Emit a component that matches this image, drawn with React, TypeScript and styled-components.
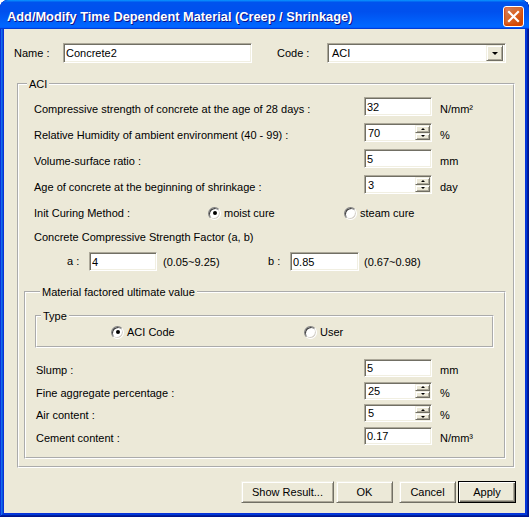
import React from "react";
import styled, { createGlobalStyle, css } from "styled-components";

const GlobalStyle = createGlobalStyle`
  html, body {
    margin: 0;
    padding: 0;
    background: #ffffff;
  }
  body {
    font-family: "Liberation Sans", Arial, sans-serif;
    font-size: 11px;
    color: #000;
  }
  * {
    box-sizing: border-box;
  }
`;

const sunken = css`
  background: #fff;
  border: 1px solid;
  border-color: #aca899 #fff #fff #aca899;
  box-shadow: inset 1px 1px 0 #716f64, inset -1px -1px 0 #f1efe2;
`;

const raised = css`
  background: #ece9d8;
  border: 1px solid;
  border-color: #f1efe2 #716f64 #716f64 #f1efe2;
  box-shadow: inset 1px 1px 0 #fff, inset -1px -1px 0 #aca899;
`;

const Window = styled.div`
  width: 529px;
  height: 517px;
  display: flex;
  flex-direction: column;
  background: #0831d9;
  border-radius: 8px 8px 0 0;
  overflow: hidden;
  box-shadow: inset -1px -1px #00138c, inset 1px 1px #0831d9,
    inset -2px -2px #001ea0, inset 2px 2px #166aee, inset -3px -3px #003bda,
    inset 3px 3px #0855dd;
`;

const TitleBar = styled.div`
  height: 29px;
  flex: none;
  display: flex;
  align-items: center;
  justify-content: space-between;
  padding: 3px 5px 0 7px;
  border-radius: 8px 8px 0 0;
  background: linear-gradient(
    180deg,
    #0997ff,
    #0053ee 8%,
    #0050ee 40%,
    #06f 88%,
    #06f 93%,
    #005bff 95%,
    #003dd7 96%,
    #003dd7
  );
`;

const Title = styled.span`
  font-family: "Liberation Sans", Arial, sans-serif;
  font-weight: 700;
  font-size: 12.8px;
  color: #fff;
  text-shadow: 1px 1px #0f1089;
`;

const CloseButton = styled.div`
  width: 21px;
  height: 21px;
  border: 1px solid #fff;
  border-radius: 3px;
  display: flex;
  align-items: center;
  justify-content: center;
  background: radial-gradient(
    circle at 90% 90%,
    #cc4600 0%,
    #dc6527 55%,
    #cd7546 70%,
    #e37d5f 90%
  );
  box-shadow: inset 0 -1px 2px 1px #da4600;
`;

const Body = styled.div`
  flex: 1;
  margin: 0 4px 4px 4px;
  background: #ece9d8;
  display: flex;
  flex-direction: column;
  padding: 14px 9px 0 10px;
`;

const TopRow = styled.div`
  display: flex;
  align-items: center;
  height: 20px;
`;

const FieldLabel = styled.span<{ $width: number; $gap?: number }>`
  width: ${(p) => p.$width}px;
  margin-left: ${(p) => p.$gap ?? 0}px;
  line-height: 13px;
  white-space: nowrap;
`;

const TextBox = styled.input<{ $width: number; $height?: number }>`
  ${sunken};
  width: ${(p) => p.$width}px;
  height: ${(p) => p.$height ?? 19}px;
  padding: 0 2px;
  font: inherit;
  color: #000;
  outline: none;
`;

const SelectBox = styled.div`
  ${sunken};
  width: 179px;
  height: 20px;
  display: flex;
  align-items: center;
  padding: 2px 2px 2px 4px;
`;

const SelectValue = styled.span`
  flex: 1;
`;

const DropButton = styled.div`
  ${raised};
  width: 17px;
  height: 16px;
  display: flex;
  align-items: center;
  justify-content: center;
`;

const Arrow = styled.span<{ $dir: "up" | "down"; $size: number }>`
  width: 0;
  height: 0;
  border-left: ${(p) => p.$size}px solid transparent;
  border-right: ${(p) => p.$size}px solid transparent;
  ${(p) =>
    p.$dir === "down"
      ? `border-top: ${p.$size}px solid #000;`
      : `border-bottom: ${p.$size}px solid #000;`}
`;

const Group = styled.fieldset<{
  $width: number;
  $pad: string;
  $mt?: number;
  $ml?: number;
}>`
  margin: ${(p) => p.$mt ?? 0}px 0 0 ${(p) => p.$ml ?? 0}px;
  width: ${(p) => p.$width}px;
  min-width: 0;
  padding: ${(p) => p.$pad};
  border: 2px groove #fff;
`;

const Legend = styled.legend<{ $ml: number }>`
  padding: 0 2px;
  margin-left: ${(p) => p.$ml}px;
  line-height: 14px;
  white-space: nowrap;
`;

const FormGrid = styled.div<{ $labelWidth: number; $rowGap: number; $pl: number }>`
  display: grid;
  grid-template-columns: ${(p) => p.$labelWidth}px 68px auto;
  column-gap: 8px;
  row-gap: ${(p) => p.$rowGap}px;
  align-items: end;
  padding-left: ${(p) => p.$pl}px;
`;

const Label = styled.span`
  line-height: 13px;
  white-space: nowrap;
`;

const Unit = styled.span`
  line-height: 13px;
  white-space: nowrap;
`;

const SpinBox = styled.div<{ $height: number }>`
  ${sunken};
  width: 68px;
  height: ${(p) => p.$height}px;
  display: flex;
  padding: 1px;
`;

const SpinText = styled.span`
  flex: 1;
  display: flex;
  align-items: center;
  padding-left: 2px;
`;

const SpinButtons = styled.div`
  width: 15px;
  display: flex;
  flex-direction: column;
`;

const SpinHalf = styled.div`
  ${raised};
  flex: 1;
  display: flex;
  align-items: center;
  justify-content: center;
`;

const OptionRow = styled.div<{ $mt: number; $pl: number }>`
  display: flex;
  align-items: center;
  height: 16px;
  margin-top: ${(p) => p.$mt}px;
  padding-left: ${(p) => p.$pl}px;
`;

const RadioItem = styled.label<{ $width?: number }>`
  display: flex;
  align-items: center;
  gap: 3px;
  width: ${(p) => (p.$width ? `${p.$width}px` : "auto")};
  line-height: 13px;
  white-space: nowrap;
`;

const RadioCircle = styled.span<{ $checked?: boolean }>`
  width: 13px;
  height: 13px;
  border-radius: 50%;
  background: #fff;
  border: 1px solid;
  border-color: #808080 #fff #fff #808080;
  box-shadow: inset 1px 1px 0 #404040, inset -1px -1px 0 #d4d0c8;
  display: flex;
  align-items: center;
  justify-content: center;
  flex: none;
  &::after {
    content: "";
    width: 4px;
    height: 4px;
    border-radius: 50%;
    background: ${(p) => (p.$checked ? "#000" : "transparent")};
  }
`;

const Caption = styled.div<{ $mt: number; $pl: number }>`
  margin-top: ${(p) => p.$mt}px;
  padding-left: ${(p) => p.$pl}px;
  line-height: 13px;
`;

const FactorRow = styled.div`
  display: flex;
  align-items: center;
  margin-top: 8px;
  padding-left: 43px;
  height: 19px;
`;

const Range = styled.span<{ $width?: number; $ml: number }>`
  margin-left: ${(p) => p.$ml}px;
  width: ${(p) => (p.$width ? `${p.$width}px` : "auto")};
  white-space: nowrap;
`;

const Spacer = styled.div<{ $h: number }>`
  height: ${(p) => p.$h}px;
`;

const ButtonBar = styled.div`
  display: flex;
  justify-content: flex-end;
  margin-top: 13px;
`;

const Button = styled.button<{ $width: number; $ml?: number; $default?: boolean }>`
  ${raised};
  width: ${(p) => p.$width}px;
  height: 22px;
  margin-left: ${(p) => p.$ml ?? 0}px;
  padding: 0;
  font: inherit;
  color: #000;
  ${(p) =>
    p.$default &&
    css`
      border: 1px solid #000;
      box-shadow: inset 1px 1px 0 #fff, inset -1px -1px 0 #716f64,
        inset -2px -2px 0 #aca899;
    `}
`;

type Field = {
  label: string;
  value: string;
  unit: string;
  spin?: boolean;
};

const aciFields: Field[] = [
  { label: "Compressive strength of concrete at the age of 28 days :", value: "32", unit: "N/mm²" },
  { label: "Relative Humidity of ambient environment (40 - 99) :", value: "70", unit: "%", spin: true },
  { label: "Volume-surface ratio :", value: "5", unit: "mm" },
  { label: "Age of concrete at the beginning of shrinkage :", value: "3", unit: "day", spin: true },
];

const materialFields: Field[] = [
  { label: "Slump :", value: "5", unit: "mm" },
  { label: "Fine aggregate percentage :", value: "25", unit: "%", spin: true },
  { label: "Air content :", value: "5", unit: "%", spin: true },
  { label: "Cement content :", value: "0.17", unit: "N/mm³" },
];

function FieldInput({ field, height }: { field: Field; height: number }) {
  if (field.spin) {
    return (
      <SpinBox $height={height}>
        <SpinText>{field.value}</SpinText>
        <SpinButtons>
          <SpinHalf>
            <Arrow $dir="up" $size={2} />
          </SpinHalf>
          <SpinHalf>
            <Arrow $dir="down" $size={2} />
          </SpinHalf>
        </SpinButtons>
      </SpinBox>
    );
  }
  return <TextBox $width={68} $height={height} defaultValue={field.value} readOnly />;
}

function Fields({
  fields,
  labelWidth,
  rowGap,
  pl,
  height,
}: {
  fields: Field[];
  labelWidth: number;
  rowGap: number;
  pl: number;
  height: number;
}) {
  // the 8px column gap sits between every column, so take it off the label column
  return (
    <FormGrid $labelWidth={labelWidth - 8} $rowGap={rowGap} $pl={pl}>
      {fields.map((f) => (
        <React.Fragment key={f.label}>
          <Label>{f.label}</Label>
          <FieldInput field={f} height={height} />
          <Unit>{f.unit}</Unit>
        </React.Fragment>
      ))}
    </FormGrid>
  );
}

export default function App() {
  return (
    <>
      <GlobalStyle />
      <Window>
        <TitleBar>
          <Title>Add/Modify Time Dependent Material (Creep / Shrinkage)</Title>
          <CloseButton>
            <svg width="13" height="13" viewBox="0 0 13 13">
              <path d="M2 2 L11 11 M11 2 L2 11" stroke="#fff" strokeWidth="2.2" strokeLinecap="square" />
            </svg>
          </CloseButton>
        </TitleBar>
        <Body>
          <TopRow>
            <FieldLabel $width={49}>Name :</FieldLabel>
            <TextBox $width={189} $height={20} defaultValue="Concrete2" readOnly />
            <FieldLabel $width={50} $gap={25}>
              Code :
            </FieldLabel>
            <SelectBox>
              <SelectValue>ACI</SelectValue>
              <DropButton>
                <Arrow $dir="down" $size={3.5} />
              </DropButton>
            </SelectBox>
          </TopRow>

          <Group $width={498} $pad="6px 7px 7px 5px" $mt={14} $ml={3}>
            <Legend $ml={3}>ACI</Legend>
            <Fields fields={aciFields} labelWidth={330} rowGap={7} pl={10} height={19} />

            <OptionRow $mt={11} $pl={10}>
              <FieldLabel $width={174}>Init Curing Method :</FieldLabel>
              <RadioItem $width={136}>
                <RadioCircle $checked />
                moist cure
              </RadioItem>
              <RadioItem>
                <RadioCircle />
                steam cure
              </RadioItem>
            </OptionRow>

            <Caption $mt={10} $pl={10}>
              Concrete Compressive Strength Factor (a, b)
            </Caption>

            <FactorRow>
              <FieldLabel $width={22}>a :</FieldLabel>
              <TextBox $width={68} defaultValue="4" readOnly />
              <Range $ml={6} $width={105}>
                (0.05~9.25)
              </Range>
              <FieldLabel $width={22}>b :</FieldLabel>
              <TextBox $width={69} defaultValue="0.85" readOnly />
              <Range $ml={5}>(0.67~0.98)</Range>
            </FactorRow>

            <Group $width={482} $pad="10px 9px 12px 9px" $mt={14}>
              <Legend $ml={5}>Material factored ultimate value</Legend>
              <Group $width={459} $pad="1px 0 6px 0">
                <Legend $ml={4}>Type</Legend>
                <OptionRow $mt={0} $pl={74}>
                  <RadioItem $width={193}>
                    <RadioCircle $checked />
                    ACI Code
                  </RadioItem>
                  <RadioItem>
                    <RadioCircle />
                    User
                  </RadioItem>
                </OptionRow>
              </Group>
              <Spacer $h={11} />
              <Fields fields={materialFields} labelWidth={328} rowGap={4.5} pl={1} height={18} />
            </Group>
          </Group>

          <ButtonBar>
            <Button $width={93}>Show Result...</Button>
            <Button $width={57} $ml={2}>
              OK
            </Button>
            <Button $width={57} $ml={6}>
              Cancel
            </Button>
            <Button $width={58} $ml={2} $default>
              Apply
            </Button>
          </ButtonBar>
        </Body>
      </Window>
    </>
  );
}
